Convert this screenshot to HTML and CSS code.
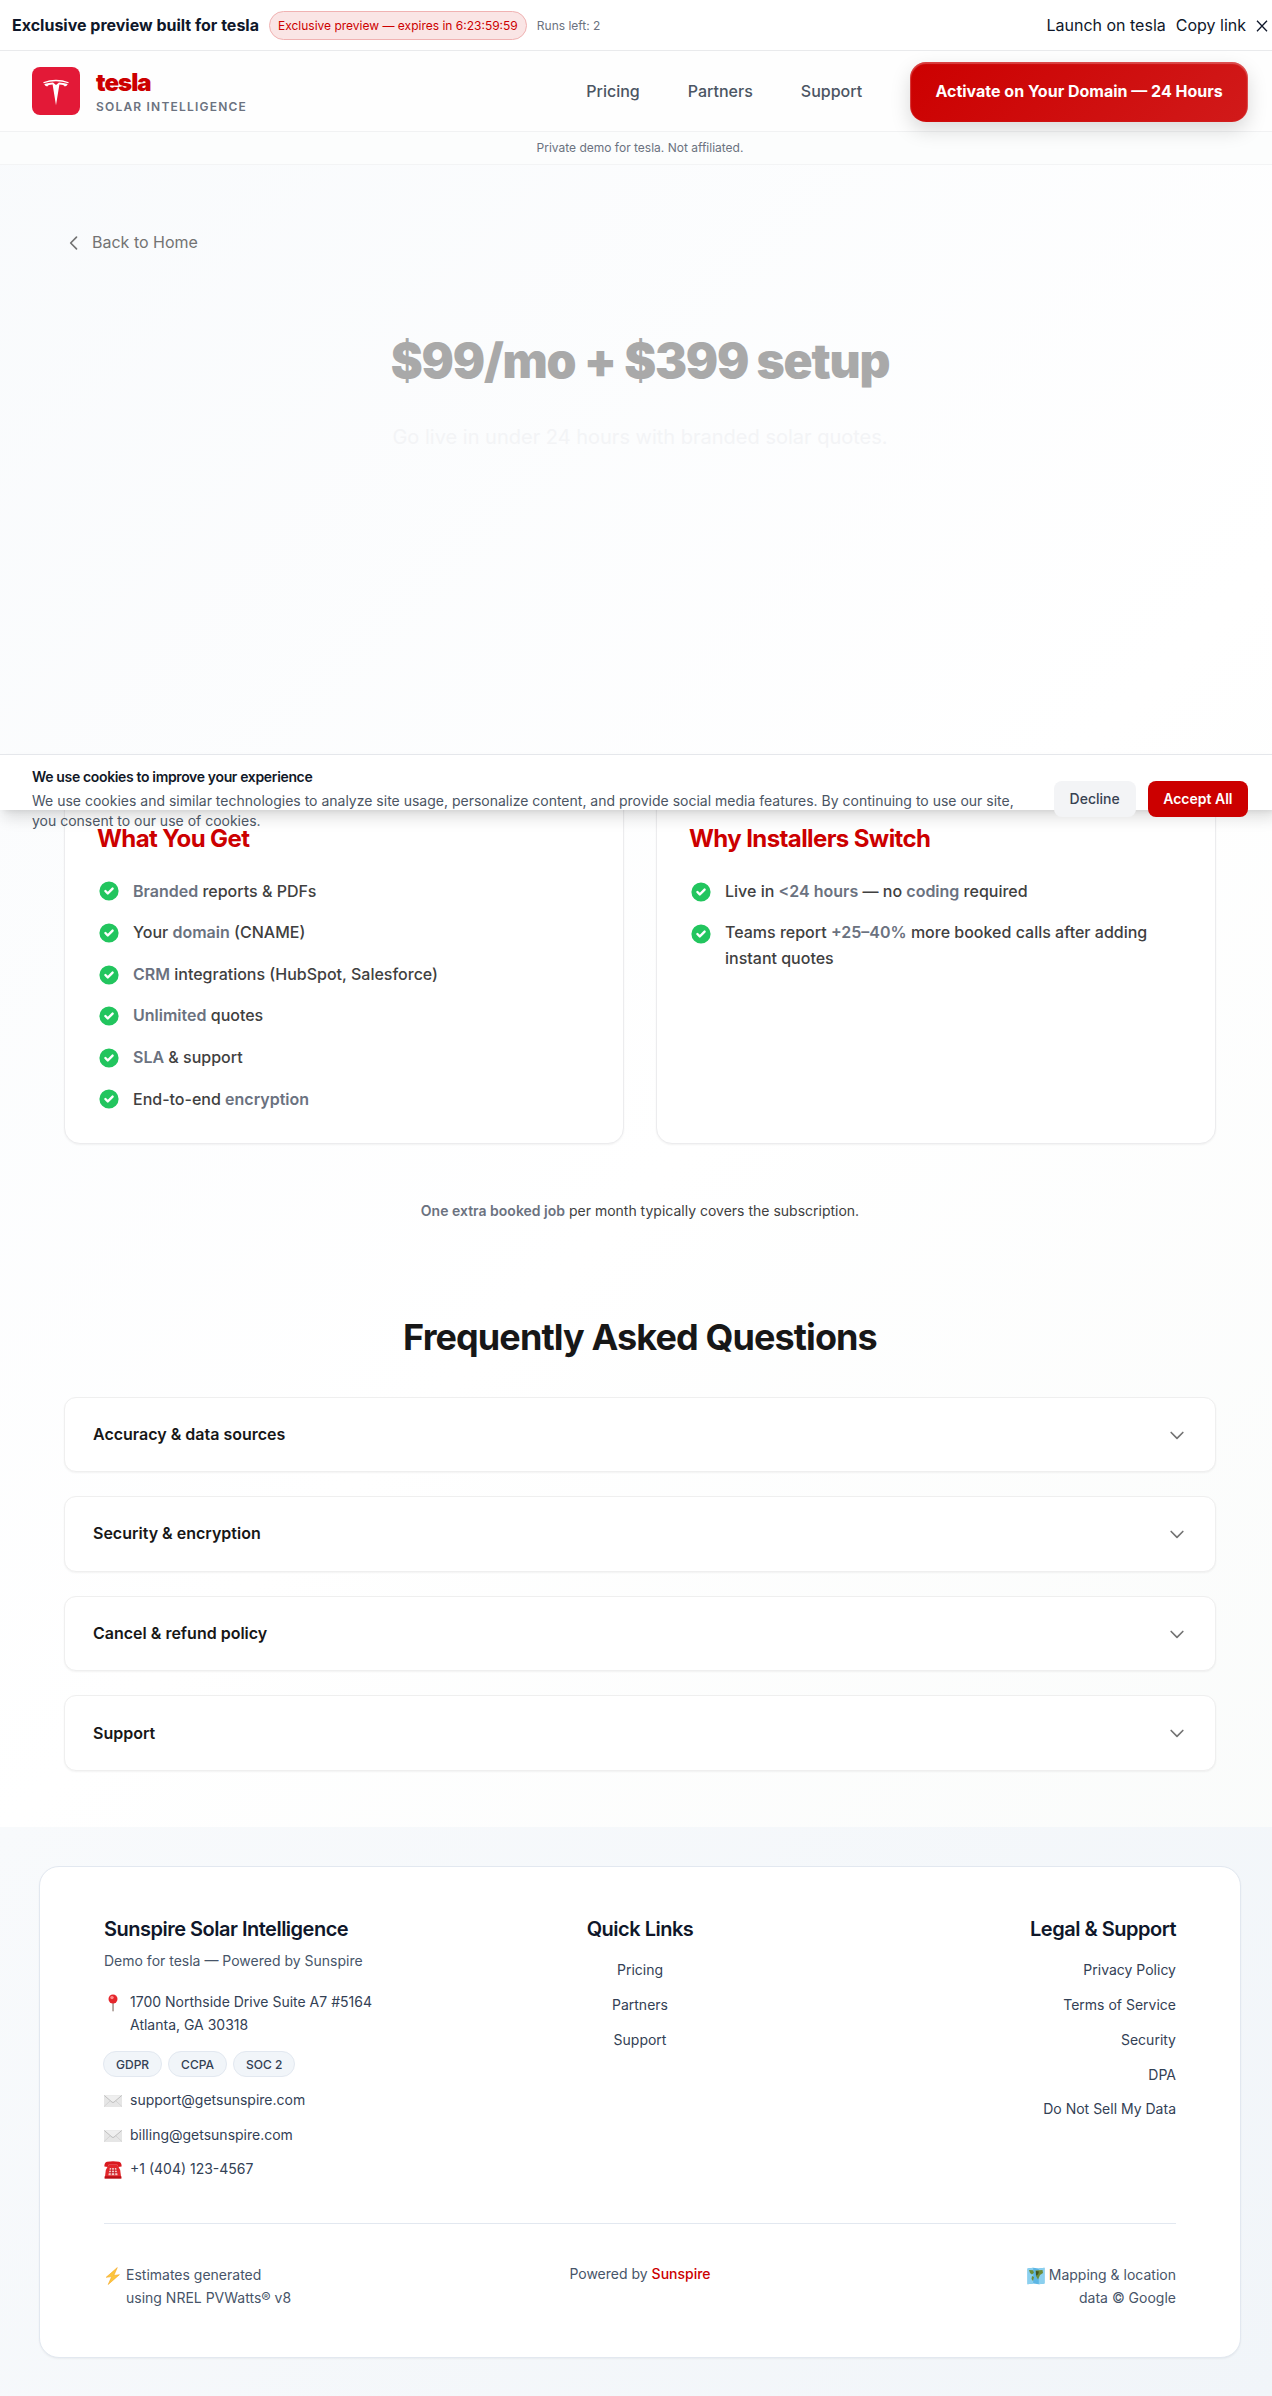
FILE: index.html
```html
<!DOCTYPE html>
<html lang="en">
<head>
<meta charset="utf-8">
<title>tesla — Solar Intelligence</title>
<link rel="stylesheet" href="styles.css">
</head>
<body>
<svg class="defs" width="0" height="0" aria-hidden="true">
  <symbol id="check" viewBox="0 0 20 20"><path fill="currentColor" fill-rule="evenodd" d="M10 18a8 8 0 100-16 8 8 0 000 16zm3.707-9.293a1 1 0 00-1.414-1.414L9 10.586 7.707 9.293a1 1 0 00-1.414 1.414l2 2a1 1 0 001.414 0l4-4z" clip-rule="evenodd"/></symbol>
  <symbol id="chevron" viewBox="0 0 24 24"><path fill="none" stroke="currentColor" stroke-width="2" stroke-linecap="round" stroke-linejoin="round" d="M19 9l-7 7-7-7"/></symbol>
  <symbol id="mail" viewBox="0 0 18 12"><rect width="18" height="12" rx=".6" fill="#e6e6e6"/><path d="M0 11.6L6.6 5.5M18 11.6L11.4 5.5" stroke="#cfcfcf" stroke-width=".8"/><path d="M.3.5L8 7.1q1 .8 2 0L17.7.5" fill="#efefef" stroke="#b9b9b9" stroke-width=".9"/></symbol>
</svg>
<div class="page">
  <div class="preview-bar">
    <div class="preview-info">
      <strong class="preview-title">Exclusive preview built for tesla</strong>
      <span class="expires">Exclusive preview — expires in 6:23:59:59</span>
      <span class="runs">Runs left: 2</span>
    </div>
    <div class="preview-actions">
      <span>Launch on tesla</span>
      <span>Copy link</span>
      <svg class="close" viewBox="0 0 12 12"><path d="M1 .8l10 10.4M11 .8L1 11.2" stroke="currentColor" stroke-width="1.3" fill="none"/></svg>
    </div>
  </div>
  <header class="header">
    <div class="brand">
      <svg class="logo" viewBox="0 0 48 48"><rect width="48" height="48" rx="8" fill="#e31937"/><path fill="#fff" d="M11.200 15.200q12.800-4.800 25.600 0l-.5 1.100q-12.300-3.900-24.600 0z"/><path fill="#fff" d="M12.200 17.100q4.700-1.700 8.800-1.700l3 2.700 3-2.700q4.100 0 8.800 1.700-.9 2-3 2.500-.8-1.800-5.400-2L24 38.300 20.600 17.600q-4.600.2-5.400 2-2.100-.5-3-2.500z"/></svg>
      <div class="brand-text"><span class="brand-name">tesla</span><span class="brand-sub">SOLAR INTELLIGENCE</span></div>
    </div>
    <nav class="nav">
      <a>Pricing</a><a>Partners</a><a>Support</a>
      <button class="cta">Activate on Your Domain — 24 Hours</button>
    </nav>
  </header>
  <div class="disclaimer">Private demo for tesla. Not affiliated.</div>

  <main class="main">
    <a class="back"><svg viewBox="0 0 24 24"><path d="M15 19l-7-7 7-7" fill="none" stroke="currentColor" stroke-width="2" stroke-linecap="round" stroke-linejoin="round"/></svg>Back to Home</a>
    <section class="hero">
      <h1>$99/mo + $399 setup</h1>
      <p>Go live in under 24 hours with branded solar quotes.</p>
    </section>
    <section class="cards">
      <article class="card">
        <h2>What You Get</h2>
        <ul>
          <li><svg><use href="#check"/></svg><span><b>Branded</b> reports &amp; PDFs</span></li>
          <li><svg><use href="#check"/></svg><span>Your <b>domain</b> (CNAME)</span></li>
          <li><svg><use href="#check"/></svg><span><b>CRM</b> integrations (HubSpot, Salesforce)</span></li>
          <li><svg><use href="#check"/></svg><span><b>Unlimited</b> quotes</span></li>
          <li><svg><use href="#check"/></svg><span><b>SLA</b> &amp; support</span></li>
          <li><svg><use href="#check"/></svg><span>End-to-end <b>encryption</b></span></li>
        </ul>
      </article>
      <article class="card card-why">
        <h2>Why Installers Switch</h2>
        <ul>
          <li><svg><use href="#check"/></svg><span>Live in <b>&lt;24 hours</b> — no <b>coding</b> required</span></li>
          <li><svg><use href="#check"/></svg><span>Teams report <b>+25–40%</b> more booked calls after adding instant quotes</span></li>
        </ul>
      </article>
    </section>
    <p class="note"><b>One extra booked job</b> per month typically covers the subscription.</p>
    <h2 class="faq-title">Frequently Asked Questions</h2>
    <section class="faq">
      <div class="faq-item">Accuracy &amp; data sources<svg><use href="#chevron"/></svg></div>
      <div class="faq-item">Security &amp; encryption<svg><use href="#chevron"/></svg></div>
      <div class="faq-item">Cancel &amp; refund policy<svg><use href="#chevron"/></svg></div>
      <div class="faq-item">Support<svg><use href="#chevron"/></svg></div>
    </section>
  </main>

  <footer class="footer">
    <div class="footer-card">
      <div class="footer-cols">
        <div class="col-brand">
          <h3>Sunspire Solar Intelligence</h3>
          <p class="tagline">Demo for tesla — Powered by Sunspire</p>
          <div class="contact address">
            <svg viewBox="0 0 18 18"><rect x="8.300" y="7" width="1.500" height="10.500" rx=".7" fill="#a08f88"/><circle cx="9" cy="5" r="4.500" fill="#e5262c"/><circle cx="8" cy="3.600" r="1.700" fill="#ff8c8c"/></svg>
            <span>1700 Northside Drive Suite A7 #5164<br>Atlanta, GA 30318</span>
          </div>
          <div class="badges"><span>GDPR</span><span>CCPA</span><span>SOC 2</span></div>
          <div class="contact"><svg class="mail"><use href="#mail"/></svg><span>support@getsunspire.com</span></div>
          <div class="contact"><svg class="mail"><use href="#mail"/></svg><span>billing@getsunspire.com</span></div>
          <div class="contact"><svg viewBox="0 0 18 18"><path d="M.4 5.600Q.2 1.600 3 .8q6-1.300 12 0 2.800.8 2.600 4.800l-3.300.4-1-2.200H4.700L3.700 6z" fill="#d9191f"/><path d="M4.700 3.800h8.600L16.200 9l1 8.200H.8l1-8.200z" fill="#e3262a"/><path d="M.6 15.300h16.800v2.300H.6z" fill="#b80f16"/><path d="M5.800 7h6.400l1.400 7.300H4.400z" fill="#f6c9c7"/><path d="M4.900 9.200h8.200M4.600 11.700h8.800M7.700 7l-.5 7.300M10.300 7l.5 7.300" stroke="#c51c22" stroke-width=".9"/></svg><span>+1 (404) 123-4567</span></div>
        </div>
        <div class="col-links">
          <h3>Quick Links</h3>
          <a>Pricing</a><a>Partners</a><a>Support</a>
        </div>
        <div class="col-legal">
          <h3>Legal &amp; Support</h3>
          <a>Privacy Policy</a><a>Terms of Service</a><a>Security</a><a>DPA</a><a>Do Not Sell My Data</a>
        </div>
      </div>
      <div class="footer-bottom">
        <div class="credit"><svg viewBox="0 0 18 18"><path d="M13.300.6L2.200 10.300l5.500-.7-3.500 7.900 11.200-9.800-5.600.8z" fill="#fcc63d" stroke="#f5a623" stroke-width=".6"/></svg><span>Estimates generated<br>using NREL PVWatts® v8</span></div>
        <div class="powered">Powered by <b>Sunspire</b></div>
        <div class="credit credit-map"><svg viewBox="0 0 18 18"><path d="M.5 1.500l5.700-.7 5.600.7 5.700-.7v15.700l-5.700.7-5.600-.7-5.700.7z" fill="#5cb6e4"/><path d="M6.200.8v15.700l-5.700.7V1.500zM11.800 1.500l5.700-.7v15.700l-5.700.7z" fill="#8bd0ef"/><path d="M2 3l4 .3 1 2.500-2 1.600L3 6zM8.500 3.500L15.500 3l.5 3-3 2-2 4.500L9 9zM5 9l2 1-1 4-1.500-2z" fill="#6c8d3a"/><path d="M9 4l3 .5-1 3-2 1z" fill="#44531f"/></svg><span>Mapping &amp; location<br>data © Google</span></div>
      </div>
    </div>
  </footer>
</div>

<aside class="cookie">
  <div class="cookie-text">
    <h4>We use cookies to improve your experience</h4>
    <p>We use cookies and similar technologies to analyze site usage, personalize content, and provide social media features. By continuing to use our site, you consent to our use of cookies.</p>
  </div>
  <div class="cookie-actions"><button class="decline">Decline</button><button class="accept">Accept All</button></div>
</aside>
</body>
</html>
```
FILE: styles.css
```css
* { box-sizing: border-box; margin: 0; padding: 0; }
html { overflow: hidden; }
body {
  position: relative;
  width: 1280px;
  height: 2396px;
  overflow: hidden;
  font-family: Inter, sans-serif;
  font-size: 16px;
  line-height: 1.6;
  color: #171717;
  background: linear-gradient(135deg, #f8fafc 0%, #fff 50%, #f8faf9 100%);
}
button { font: inherit; border: 0; }
.defs { position: absolute; }

.preview-bar {
  display: flex;
  justify-content: space-between;
  align-items: center;
  height: 51px;
  padding: 1px 12px 0;
  background: #fff;
  border-bottom: 1px solid #e9eaec;
  color: #0f172a;
}
.preview-info, .preview-actions { display: flex; align-items: center; gap: 10px; }
.preview-title { font-weight: 700; }
.expires {
  height: 29px;
  padding: 0 8px;
  line-height: 27px;
  font-size: 12px;
  border: 1px solid #f0b2b2;
  border-radius: 15px;
  background: #fae5e5;
  color: #c00;
}
.runs { font-size: 12px; color: #6b7280; }
.close { width: 12px; height: 12px; }

.header {
  display: flex;
  justify-content: space-between;
  align-items: center;
  height: 81px;
  padding: 0 32px;
  background: #fefefe;
  border-bottom: 1px solid #f1f2f3;
}
.brand { display: flex; align-items: center; gap: 16px; }
.logo { width: 48px; height: 48px; }
.brand-text { display: flex; flex-direction: column; }
.brand-name { font-size: 24px; line-height: 32px; font-weight: 900; color: #c00; letter-spacing: -.04em; }
.brand-sub { font-size: 12px; line-height: 16px; font-weight: 600; color: #6b7280; letter-spacing: .1em; }
.nav { display: flex; align-items: center; gap: 48px; padding-top: 1px; font-weight: 500; color: #4b5563; }
.cta {
  height: 60px;
  padding: 0 25.3px;
  font-weight: 700;
  color: #fff;
  background: linear-gradient(135deg, #c00, #d11a1a);
  border-radius: 16px;
  box-shadow: 0 8px 20px rgba(0,0,0,.15), inset 0 1px 1px 1px rgba(255,255,255,.25);
}
.disclaimer {
  height: 33px;
  line-height: 32px;
  text-align: center;
  font-size: 12px;
  color: #6b7280;
  background: #fcfdfd;
  border-bottom: 1px solid #f3f4f5;
}

.main { padding: 65px 64px 0; height: 1662px; }
.back { display: flex; align-items: center; gap: 8px; height: 26px; color: #737373; }
.back svg { width: 20px; height: 20px; }
.hero { text-align: center; padding-top: 75px; height: 534px; }
.hero h1 { font-size: 48px; line-height: 60px; font-weight: 900; letter-spacing: -.025em; color: #a9a9a9; }
.hero p { margin-top: 30px; font-size: 20px; line-height: 32px; color: #f3f4f6; }

.cards { display: grid; grid-template-columns: 1fr 1fr; gap: 32px; height: 354px; }
.card {
  padding: 31.700px 32px 0;
  background: #fff;
  border: 1px solid #ececee;
  border-radius: 16px;
  box-shadow: 0 1px 2px rgba(0,0,0,.05);
}
.card h2 { font-size: 24px; line-height: 32px; font-weight: 700; letter-spacing: -.025em; color: #c00; margin-bottom: 24px; }
.card ul { list-style: none; display: flex; flex-direction: column; gap: 16px; }
.card li { display: flex; align-items: center; gap: 12px; font-weight: 500; color: #404040; }
.card li svg { flex: none; width: 24px; height: 24px; color: #22c55e; }
.card b, .note b { font-weight: 600; color: #6b7280; }
.card-why li { align-items: flex-start; }
.card-why li svg { margin-top: 1.5px; }

.note { margin-top: 56px; text-align: center; font-size: 14px; line-height: 22px; color: #404040; }
.faq-title { margin-top: 95px; text-align: center; font-size: 36px; line-height: 40px; font-weight: 700; letter-spacing: -.025em; }
.faq { display: flex; flex-direction: column; gap: 24px; margin-top: 39.5px; }
.faq-item {
  display: flex;
  justify-content: space-between;
  align-items: center;
  height: 75.6px;
  padding: .5px 28px 0;
  font-weight: 600;
  background: #fff;
  border: 1px solid #efefef;
  border-radius: 12px;
  box-shadow: 0 1px 2px rgba(0,0,0,.05);
}
.faq-item svg { width: 20px; height: 20px; color: #737373; }

.footer { height: 569px; padding: 39px 39px; background: linear-gradient(135deg, #f8fafc, #f1f5f9); }
.footer-card {
  height: 492px;
  padding: 45px 64px 0;
  background: #fff;
  border: 1px solid #e2e8f0;
  border-radius: 20px;
  box-shadow: 0 1px 2px rgba(0,0,0,.05);
  font-size: 14px;
  line-height: 22.75px;
  color: #334155;
}
.footer-cols { display: grid; grid-template-columns: 1fr 1fr 1fr; height: 312px; border-bottom: 1px solid #e2e8f0; }
.footer h3 { font-size: 20px; line-height: 35px; font-weight: 600; letter-spacing: -.025em; color: #0f172a; }
.tagline { margin-top: 3px; color: #475569; }
.contact { display: flex; align-items: center; gap: 8px; margin-bottom: 12px; }
.contact svg { flex: none; width: 18px; height: 18px; }
.contact .mail { height: 12px; margin-top: 2px; }
.address { align-items: flex-start; margin: 18px 0 15px; }
.address svg { margin-top: 3px; }
.badges { display: flex; gap: 6px; margin: 0 0 11.600px -1px; }
.badges span {
  height: 26px;
  padding: 0 12px;
  font-size: 12px;
  line-height: 25px;
  font-weight: 500;
  background: #f1f5f9;
  border: 1px solid #e2e8f0;
  border-radius: 13px;
}
.col-links, .col-legal { display: flex; flex-direction: column; gap: 12.1px; text-align: center; }
.col-legal { text-align: right; }
.footer-bottom { display: grid; grid-template-columns: 1fr 1fr 1fr; padding-top: 40px; color: #475569; }
.credit { display: flex; align-items: flex-start; gap: 4px; }
.credit svg { flex: none; width: 18px; height: 18px; margin-top: 3px; }
.credit-map { justify-content: flex-end; text-align: right; }
.powered { text-align: center; margin-top: -1px; }
.powered b { font-weight: 500; color: #c00; }

/* Consent bar floats above the plan cards; its copy runs past the bar's lower edge. */
.cookie {
  position: absolute;
  top: 754px;
  left: 0;
  width: 1280px;
  height: 56px;
  padding: 11px 32px 0;
  display: flex;
  justify-content: space-between;
  background: #fff;
  border-top: 1px solid #e5e7eb;
  box-shadow: 0 10px 15px -3px rgba(0,0,0,.14), 0 4px 6px -4px rgba(0,0,0,.1);
  font-size: 14px;
  line-height: 20px;
  color: #4b5563;
}
.cookie h4 { font-size: 14px; font-weight: 600; line-height: 22px; letter-spacing: -.025em; color: #111827; margin-bottom: 3px; }
.cookie-text { width: 990px; }
.cookie-actions { display: flex; gap: 12px; margin-top: 15px; }
.cookie button { height: 36px; padding: 0 16px; border-radius: 8px; font-weight: 500; }
.decline { background: #f3f4f6; color: #374151; }
.cookie .accept { background: #c00; color: #fff; font-weight: 600; padding: 0 15.5px; }
```
